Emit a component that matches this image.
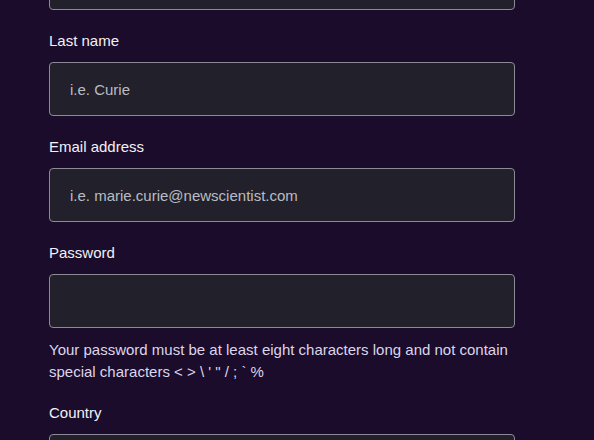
import React from 'react';

const fields = [
    { id: 'lastName', label: 'Last name', placeholder: 'i.e. Curie', type: 'text' },
    { id: 'email', label: 'Email address', placeholder: 'i.e. marie.curie@newscientist.com', type: 'email' },
    { id: 'password', label: 'Password', placeholder: '', type: 'password' },
];

const inputClass =
    'block w-full h-[54px] rounded-[4px] border border-[#8d8a98] bg-[#22212b] px-[20px] text-[15px] text-[#e8e6ee] placeholder:text-[#b9bcc4] outline-none';

export default function App() {
    return (
        <div
            className="h-[440px] w-[594px] overflow-hidden bg-[#1a0c2a]"
            style={{ fontFamily: '"Liberation Sans", Arial, sans-serif' }}
        >
            <form className="w-[466px] ml-[49px]" onSubmit={(e) => e.preventDefault()}>
                {/* first name box, mostly scrolled off */}
                <input className={`${inputClass} -mt-[44px] mb-[20px]`} type="text" />

                {fields.map((f) => (
                    <div key={f.id} className="mb-[20px]">
                        <label htmlFor={f.id} className="block text-[15px] leading-[22px] text-[#f3f0f7] mb-[10px]">
                            {f.label}
                        </label>
                        <input id={f.id} type={f.type} placeholder={f.placeholder} className={inputClass} />
                        {f.id === 'password' && (
                            <p className="mt-[11px] -mb-[1px] text-[15px] leading-[22px] text-[#ddd6ea]">
                                Your password must be at least eight characters long and not contain special characters &lt; &gt; \ ' " / ; ` %
                            </p>
                        )}
                    </div>
                ))}

                <div>
                    <label htmlFor="country" className="block text-[15px] leading-[22px] text-[#f3f0f7] mb-[10px]">
                        Country
                    </label>
                    <select id="country" className={inputClass}>
                        <option></option>
                    </select>
                </div>
            </form>
        </div>
    );
}
